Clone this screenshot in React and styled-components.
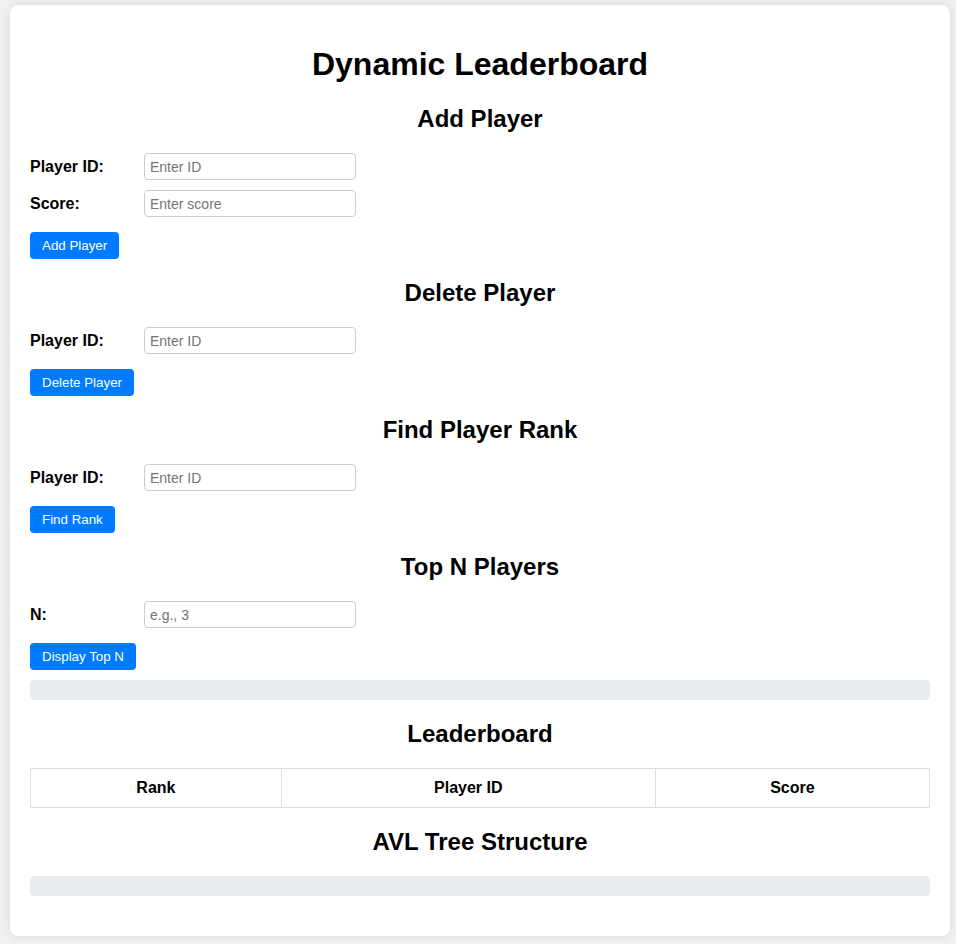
import styled, { createGlobalStyle } from 'styled-components';

const GlobalStyle = createGlobalStyle`
  html, body {
    margin: 0;
    background: #f0f0f0;
    font-family: "Liberation Sans", Arial, sans-serif;
  }
  body {
    padding: 5px 10px;
  }
`;

const Card = styled.div`
  width: 900px;
  background: #fff;
  border-radius: 8px;
  box-shadow: 0 0 10px rgba(0, 0, 0, 0.1);
  padding: 20px;
`;

const Title = styled.h1`
  text-align: center;
  font-size: 32px;
  margin: 21px 0 22px;
  line-height: 37px;
  color: #000;
`;

const SectionTitle = styled.h2`
  text-align: center;
  font-size: 24px;
  margin: 20px 0;
  line-height: 28px;
  color: #000;
`;

const Row = styled.div`
  display: flex;
  align-items: center;
  margin-bottom: 10px;
`;

const Label = styled.label`
  width: 114px;
  font-weight: bold;
  font-size: 16px;
  color: #000;
`;

const Input = styled.input`
  width: 212px;
  height: 27px;
  box-sizing: border-box;
  padding: 5px;
  border: 1px solid #ccc;
  border-radius: 4px;
  font-family: inherit;
  font-size: 14px;
  &::placeholder {
    color: #757575;
  }
`;

const Button = styled.button`
  display: block;
  margin-top: 15px;
  height: 27px;
  padding: 0 12px;
  background: #007bff;
  color: #fff;
  border: none;
  border-radius: 4px;
  font-family: inherit;
  font-size: 13.33px;
  cursor: pointer;
`;

const Output = styled.div`
  background: #e9ecef;
  border-radius: 4px;
  height: 20px;
  margin: 10px 0 20px;
`;

const Table = styled.table`
  width: 100%;
  border-collapse: collapse;
`;

const Th = styled.th`
  width: ${(p) => p.$w};
  border: 1px solid #ddd;
  padding: 10px;
  font-size: 16px;
  line-height: 18px;
  text-align: center;
  color: #000;
`;

function Field({ label, placeholder }) {
  return (
    <Row>
      <Label>{label}</Label>
      <Input placeholder={placeholder} />
    </Row>
  );
}

function App() {
  return (
    <>
      <GlobalStyle />
      <Card>
        <Title>Dynamic Leaderboard</Title>

        <SectionTitle>Add Player</SectionTitle>
        <Field label="Player ID:" placeholder="Enter ID" />
        <Field label="Score:" placeholder="Enter score" />
        <Button>Add Player</Button>

        <SectionTitle>Delete Player</SectionTitle>
        <Field label="Player ID:" placeholder="Enter ID" />
        <Button>Delete Player</Button>

        <SectionTitle>Find Player Rank</SectionTitle>
        <Field label="Player ID:" placeholder="Enter ID" />
        <Button>Find Rank</Button>

        <SectionTitle>Top N Players</SectionTitle>
        <Field label="N:" placeholder="e.g., 3" />
        <Button>Display Top N</Button>
        <Output />

        <SectionTitle>Leaderboard</SectionTitle>
        <Table>
          <thead>
            <tr>
              <Th $w="27.9%">Rank</Th>
              <Th $w="41.6%">Player ID</Th>
              <Th $w="30.5%">Score</Th>
            </tr>
          </thead>
        </Table>

        <SectionTitle>AVL Tree Structure</SectionTitle>
        <Output />
      </Card>
    </>
  );
}

export default App;
